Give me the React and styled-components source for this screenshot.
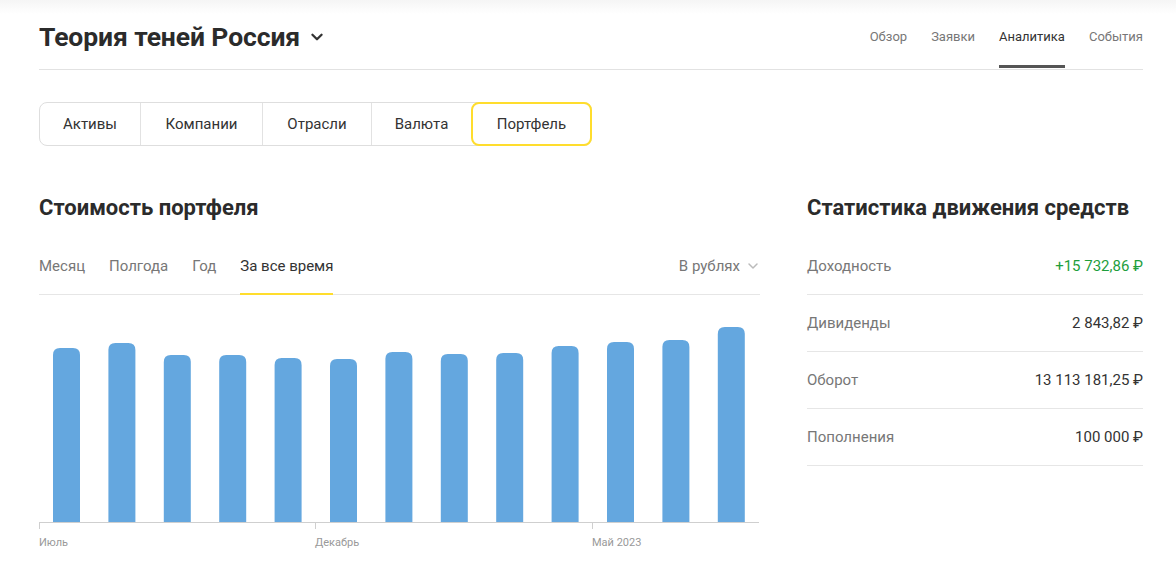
import React from 'react';
import styled, { createGlobalStyle } from 'styled-components';

const GlobalStyle = createGlobalStyle`
  html, body {
    margin: 0;
    background: linear-gradient(#f5f5f5 0, #ffffff 14px) no-repeat, #fff;
    font-family: Roboto, "Noto Sans", Arial, sans-serif;
    color: #333;
  }
`;

const bars = [348, 343, 355, 355, 358, 359, 352, 354, 353, 346, 342, 340, 327];

const Page = styled.div`
  padding: 0 33px 0 39px;
`;

const Header = styled.header`
  display: flex;
  align-items: stretch;
  justify-content: space-between;
  box-sizing: border-box;
  height: 70px;
  padding-top: 8px;
  border-bottom: 1px solid #e2e2e2;
`;

const Title = styled.h1`
  display: flex;
  align-items: center;
  gap: 9px;
  margin: 0 0 4px;
  font-size: 26.5px;
  font-weight: 700;
  color: #2b2b2b;
  letter-spacing: -0.1px;
`;

const Nav = styled.nav`
  display: flex;
  gap: 24px;
`;

const NavItem = styled.a`
  display: flex;
  align-items: center;
  font-size: 13px;
  color: ${p => (p.$active ? '#333' : '#777')};
  border-bottom: 3px solid ${p => (p.$active ? '#555' : 'transparent')};
  margin-bottom: 1px;
`;

const Segments = styled.div`
  display: inline-flex;
  box-sizing: border-box;
  margin-top: 32px;
  height: 44px;
  border: 1px solid #dedede;
  border-radius: 8px;
`;

const Segment = styled.div`
  display: flex;
  align-items: center;
  justify-content: center;
  width: ${p => p.$w}px;
  font-size: 15px;
  color: #333;
  box-sizing: border-box;
  border-left: 1px solid #e2e2e2;
  &:first-child { border-left: none; }
  ${p => p.$active && `
    border: 2px solid #ffdd2d;
    border-radius: 8px;
    margin: -1px -1px -1px 0;
  `}
`;

const Columns = styled.div`
  display: grid;
  grid-template-columns: 721px 336px;
  column-gap: 47px;
  margin-top: 49px;
`;

const Heading = styled.h2`
  margin: 0;
  font-size: 22px;
  font-weight: 700;
  color: #2b2b2b;
  line-height: 26px;
`;

const TabsRow = styled.div`
  display: flex;
  justify-content: space-between;
  margin-top: 17px;
  border-bottom: 1px solid #e6e6e6;
  height: 56px;
`;

const Tabs = styled.div`
  display: flex;
  gap: 24px;
`;

const Tab = styled.div`
  display: flex;
  align-items: center;
  font-size: 15px;
  color: ${p => (p.$active ? '#333' : '#777')};
  border-bottom: 2px solid ${p => (p.$active ? '#ffdd2d' : 'transparent')};
  margin-bottom: -1px;
`;

const Currency = styled.div`
  display: flex;
  align-items: center;
  gap: 6px;
  font-size: 15px;
  color: #777;
`;

const Chart = styled.div`
  margin-top: 0;
`;

const AxisLabels = styled.div`
  position: relative;
  height: 24px;
  font-size: 11px;
  color: #999;
`;

const AxisLabel = styled.span`
  position: absolute;
  top: 7px;
`;

const StatList = styled.div`
  margin-top: 17px;
`;

const StatRow = styled.div`
  display: flex;
  justify-content: space-between;
  align-items: center;
  height: 56px;
  border-bottom: 1px solid #e6e6e6;
  font-size: 15px;
`;

const StatLabel = styled.span`
  color: #777;
`;

const StatValue = styled.span`
  color: ${p => (p.$positive ? '#1e9e3c' : '#333')};
`;

const Chevron = ({ size = 14, color = '#333', width = 2 }) => (
  <svg width={size} height={size} viewBox="0 0 14 14" fill="none">
    <path d="M3 5l4 4 4-4" stroke={color} strokeWidth={width} strokeLinecap="round" strokeLinejoin="round" />
  </svg>
);

const BarChart = () => (
  <svg width="721" height="234" viewBox="0 0 721 234" style={{ display: 'block' }}>
    {bars.map((top, i) => {
      const x = 14 + i * 55.4;
      const y = top - 295;
      const h = 227 - y;
      return (
        <path
          key={i}
          d={`M${x} ${y + 7} Q${x} ${y} ${x + 7} ${y} L${x + 20} ${y} Q${x + 27} ${y} ${x + 27} ${y + 7} L${x + 27} ${y + h} L${x} ${y + h} Z`}
          fill="#64a7df"
        />
      );
    })}
    <line x1="0" y1="227.5" x2="720" y2="227.5" stroke="#cfcfcf" />
    {[0.5, 276.5, 553.5].map(x => (
      <line key={x} x1={x} y1="227" x2={x} y2="234" stroke="#cfcfcf" />
    ))}
  </svg>
);

const stats = [
  ['Доходность', '+15 732,86 ₽', true],
  ['Дивиденды', '2 843,82 ₽'],
  ['Оборот', '13 113 181,25 ₽'],
  ['Пополнения', '100 000 ₽'],
];

export default function App() {
  return (
    <Page>
      <GlobalStyle />
      <Header>
        <Title>
          Теория теней Россия
          <Chevron size={16} />
        </Title>
        <Nav>
          <NavItem>Обзор</NavItem>
          <NavItem>Заявки</NavItem>
          <NavItem $active>Аналитика</NavItem>
          <NavItem>События</NavItem>
        </Nav>
      </Header>

      <Segments>
        <Segment $w={100}>Активы</Segment>
        <Segment $w={122}>Компании</Segment>
        <Segment $w={109}>Отрасли</Segment>
        <Segment $w={100}>Валюта</Segment>
        <Segment $w={121} $active>Портфель</Segment>
      </Segments>

      <Columns>
        <div>
          <Heading>Стоимость портфеля</Heading>
          <TabsRow>
            <Tabs>
              <Tab>Месяц</Tab>
              <Tab>Полгода</Tab>
              <Tab>Год</Tab>
              <Tab $active>За все время</Tab>
            </Tabs>
            <Currency>
              В рублях
              <Chevron size={14} color="#bbb" width={1.5} />
            </Currency>
          </TabsRow>
          <Chart>
            <BarChart />
            <AxisLabels>
              <AxisLabel style={{ left: 0 }}>Июль</AxisLabel>
              <AxisLabel style={{ left: 276 }}>Декабрь</AxisLabel>
              <AxisLabel style={{ left: 553 }}>Май 2023</AxisLabel>
            </AxisLabels>
          </Chart>
        </div>
        <div>
          <Heading>Статистика движения средств</Heading>
          <StatList>
            {stats.map(([label, value, pos]) => (
              <StatRow key={label}>
                <StatLabel>{label}</StatLabel>
                <StatValue $positive={pos}>{value}</StatValue>
              </StatRow>
            ))}
          </StatList>
        </div>
      </Columns>
    </Page>
  );
}
